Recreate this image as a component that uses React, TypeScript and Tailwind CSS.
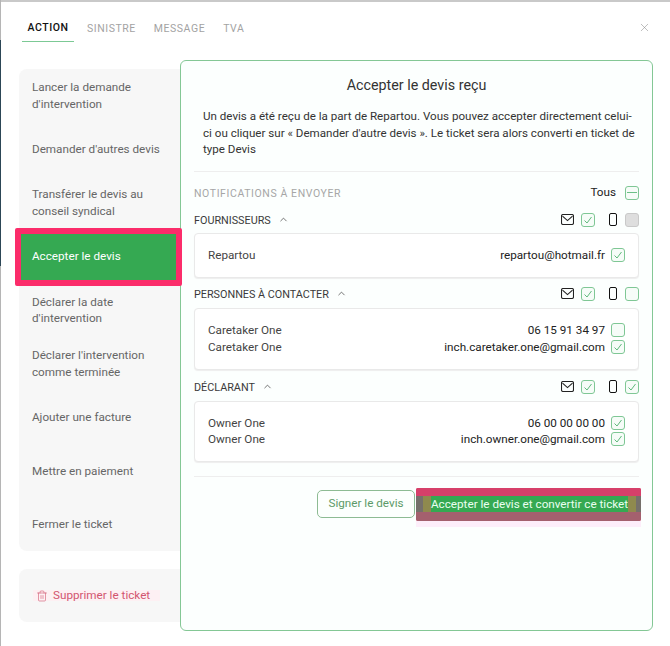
import { ChevronUp, Trash2, X } from "lucide-react"

type BoxState = "on" | "off" | "mixed" | "disabled"

function CheckBox({ state }: { state: BoxState }) {
    if (state === "disabled") {
        return <span className="block w-[14px] h-[14px] shrink-0 rounded-[3px] border border-[#c9c9c9] bg-[#dedede]" />
    }
    return (
        <span className="flex items-center justify-center w-[14px] h-[14px] shrink-0 rounded-[3px] border border-[#7fc795] bg-[#f6fcf8]">
            {state === "on" && (
                <svg width="10" height="10" viewBox="0 0 10 10" fill="none" stroke="#5fb97c" strokeWidth="1">
                    <path d="M1.5 5.5 L4 8 L8.5 2" />
                </svg>
            )}
            {state === "mixed" && <span className="block w-[10px] h-[1.5px] bg-[#6cbf86]" />}
        </span>
    )
}

function MailIcon() {
    return (
        <svg width="13" height="11" viewBox="0 0 13 11" fill="none" stroke="#222" strokeWidth="1.1">
            <rect x="0.5" y="0.5" width="12" height="10" rx="1.6" />
            <path d="M1.5 2.2 L6.5 6.6 L11.5 2.2" />
        </svg>
    )
}

function PhoneIcon() {
    return <span className="block w-[8px] h-[13px] rounded-[2px] border-[1.7px] border-[#111]" />
}

function GroupHeader({ label, mail, phone }: { label: string; mail: BoxState; phone: BoxState }) {
    return (
        <div className="flex items-center h-[14px] text-[10.8px] text-[#3a3a3a]">
            <span className="mt-[3px]">{label}</span>
            <ChevronUp size={11} strokeWidth={1.6} className="ml-[7px] text-[#444]" />
            <div className="ml-auto flex items-center">
                <MailIcon />
                <span className="ml-[7px]"><CheckBox state={mail} /></span>
                <span className="ml-[14px]"><PhoneIcon /></span>
                <span className="ml-[8px]"><CheckBox state={phone} /></span>
            </div>
        </div>
    )
}

function ContactRow({ name, value, state }: { name: string; value: string; state: BoxState }) {
    return (
        <div className="flex items-center h-[16.5px]">
            <span className="text-[#444]">{name}</span>
            <span className="ml-auto text-[#222]">{value}</span>
            <span className="ml-[6px]"><CheckBox state={state} /></span>
        </div>
    )
}

const menu = [
    "Lancer la demande d'intervention",
    "Demander d'autres devis",
    "Transférer le devis au conseil syndical",
    "Accepter le devis",
    "Déclarer la date d'intervention",
    "Déclarer l'intervention comme terminée",
    "Ajouter une facture",
    "Mettre en paiement",
    "Fermer le ticket",
]

function App() {
    return (
        <div className="w-[670px] h-[646px] overflow-hidden flex bg-white font-['Roboto',sans-serif] text-[11.7px] leading-[16.5px]">
            <div className="w-[1px] shrink-0 flex flex-col bg-[#b5b5b5]">
                <div className="h-[40px]" />
                <div className="h-[226px] bg-[#2c4656]" />
            </div>
            <div className="flex-1 flex flex-col">
                <div className="h-[2px] shrink-0 bg-[#c9c9c9]" />
                <div className="flex items-start h-[40px] shrink-0 pl-[21px] pr-[19px] text-[10.5px] tracking-[0.55px] text-[#a3a3a3]">
                    <div className="w-[52px] h-[40px] flex items-center justify-center font-medium text-[#111] border-b-[1.5px] border-[#7cc995] pt-[13px]">ACTION</div>
                    <div className="ml-[13px] h-[40px] flex items-center pt-[14px]">SINISTRE</div>
                    <div className="ml-[18px] h-[40px] flex items-center pt-[14px]">MESSAGE</div>
                    <div className="ml-[18px] h-[40px] flex items-center pt-[14px]">TVA</div>
                    <X size={13} strokeWidth={1} className="ml-auto mt-[19px] text-[#888]" />
                </div>
                <div className="flex pl-[18px] mt-[18px]">
                    <div className="w-[161px] shrink-0 pt-[9px]">
                        <div className="flex flex-col rounded-l-lg bg-[#f7f7f7] text-[#666]">
                            {menu.map((item) =>
                                item === "Accepter le devis" ? (
                                    <div key={item} className="relative z-10 -ml-[4px] -mr-[2px] -my-[2px] h-[58px] flex items-center rounded-[2px] border-[6px] border-[#fb2c6a] bg-[#35a952] pl-[11px] text-white">
                                        {item}
                                    </div>
                                ) : (
                                    <div key={item} className="h-[53.5px] flex items-center pl-[13px] pr-[20px]">{item}</div>
                                )
                            )}
                        </div>
                        <div className="mt-[18px] h-[53px] flex items-center rounded-l-lg bg-[#f7f7f7] pl-[14px] text-[#d2556f]">
                            <div className="flex items-center h-[11px] pl-[3px] pr-[10px] bg-[#fdf0f3]">
                                <Trash2 size={12} strokeWidth={1.2} className="text-[#d2556f]" />
                                <span className="ml-[5px]">Supprimer le ticket</span>
                            </div>
                        </div>
                    </div>
                    <div className="w-[473px] h-[571px] shrink-0 rounded-md border border-[#84c795] bg-[#fcfffe] px-[13px] pt-[15px]">
                        <h2 className="text-center text-[14.3px] leading-[18px] text-[#333]">Accepter le devis reçu</h2>
                        <p className="mt-[14px] pl-[9px] text-[11.6px] text-[#333]">
                            Un devis a été reçu de la part de Repartou. Vous pouvez accepter directement celui-ci ou cliquer sur « Demander d'autre devis ». Le ticket sera alors converti en ticket de type Devis
                        </p>
                        <div className="mt-[13px] border-t border-[#eeeeee]" />
                        <div className="mt-[14px] h-[14px] flex items-center text-[10.5px] tracking-[0.6px] text-[#a6a6a6]">
                            <span className="mt-[4px]">NOTIFICATIONS À ENVOYER</span>
                            <span className="ml-auto text-[11.7px] tracking-normal text-[#222]">Tous</span>
                            <span className="ml-[9px]"><CheckBox state="mixed" /></span>
                        </div>
                        <div className="mt-[13px]">
                            <GroupHeader label="FOURNISSEURS" mail="on" phone="disabled" />
                        </div>
                        <div className="mt-[6px] h-[45px] flex flex-col justify-center rounded-[4px] border border-[#e9e9e9] bg-white pl-[13px] pr-[13px] shadow-[0_1px_1px_#eeeeee]">
                            <ContactRow name="Repartou" value="repartou@hotmail.fr" state="on" />
                        </div>
                        <div className="mt-[9px]">
                            <GroupHeader label="PERSONNES À CONTACTER" mail="on" phone="off" />
                        </div>
                        <div className="mt-[7px] h-[62px] flex flex-col justify-center rounded-[4px] border border-[#e9e9e9] bg-white pl-[13px] pr-[13px] shadow-[0_1px_1px_#eeeeee]">
                            <ContactRow name="Caretaker One" value="06 15 91 34 97" state="off" />
                            <ContactRow name="Caretaker One" value="inch.caretaker.one@gmail.com" state="on" />
                        </div>
                        <div className="mt-[10px]">
                            <GroupHeader label="DÉCLARANT" mail="on" phone="on" />
                        </div>
                        <div className="mt-[7px] h-[61px] flex flex-col justify-center rounded-[4px] border border-[#e9e9e9] bg-white pl-[13px] pr-[13px] shadow-[0_1px_1px_#eeeeee]">
                            <ContactRow name="Owner One" value="06 00 00 00 00" state="on" />
                            <ContactRow name="Owner One" value="inch.owner.one@gmail.com" state="on" />
                        </div>
                        <div className="mt-[14px] border-t border-[#eeeeee]" />
                        <div className="mt-[11px] flex items-start justify-end -mr-[2px]">
                            <button className="mt-[2px] w-[98px] h-[28px] rounded-[5px] border border-[#8dbb93] bg-[#fcfffd] text-[#5c9a68]">Signer le devis</button>
                            <div className="ml-[1px] w-[225px] shadow-[0_6px_0_#fdeefa]">
                                <div className="h-[33px] flex flex-col rounded-[2px] overflow-hidden bg-[#d93d69]">
                                    <div className="h-[8px] shrink-0 bg-[#d6406a]" />
                                    <div className="flex-1 flex bg-[#75706b]">
                                        <div className="w-[7px] shrink-0" />
                                        <div className="w-[8px] shrink-0 bg-[#8f8a4e]" />
                                        <div className="flex-1 flex items-center bg-[#35a952] text-[#eafff0] whitespace-nowrap">Accepter le devis et convertir ce ticket</div>
                                        <div className="w-[8px] shrink-0 bg-[#8f8a4e]" />
                                        <div className="w-[7px] shrink-0" />
                                    </div>
                                    <div className="h-[9px] shrink-0 bg-[#a4606e]" />
                                </div>
                            </div>
                        </div>
                    </div>
                </div>
            </div>
        </div>
    )
}

export default App
